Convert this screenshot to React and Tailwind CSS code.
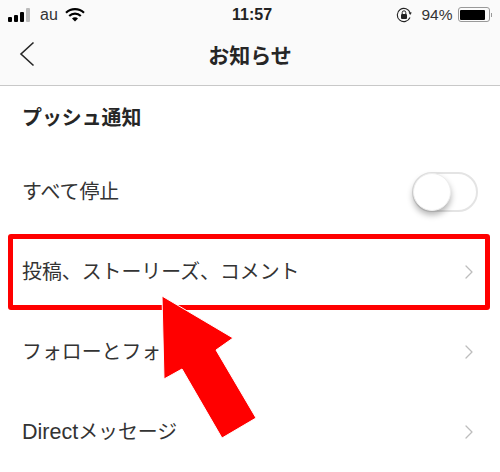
import { ChevronRight } from "lucide-react";

const font = { fontFamily: '"Liberation Sans", "Noto Sans CJK JP", sans-serif' };

const StatusBar = () => (
  <div className="h-[28px] flex items-center justify-between px-[8px] pt-[1px] text-[#333] text-[15.5px] relative">
    <div className="flex items-center">
      <div className="flex items-end gap-[2px] h-[14px]">
        <span className="w-[4px] h-[5px] bg-black rounded-[1px]"></span>
        <span className="w-[4px] h-[7px] bg-black rounded-[1px]"></span>
        <span className="w-[4px] h-[10px] bg-black rounded-[1px]"></span>
        <span className="w-[4px] h-[14px] bg-[#bbb] rounded-[1px]"></span>
      </div>
      <span className="ml-[10px] text-[16px]">au</span>
      <svg width="20" height="14" viewBox="0 0 20 14" className="ml-[7px]">
        <path d="M1 4.8a13 13 0 0 1 18 0" fill="none" stroke="#000" strokeWidth="2.2" />
        <path d="M4.2 8a8.4 8.4 0 0 1 11.6 0" fill="none" stroke="#000" strokeWidth="2.2" />
        <path d="M7 10.4a4.2 4.2 0 0 1 6 0L10 13.6z" fill="#000" />
      </svg>
    </div>
    <span className="absolute left-[232px] font-bold text-[16px] text-[#222]">11:57</span>
    <div className="flex items-center gap-[5px]">
      <svg width="16" height="16" viewBox="0 0 16 16">
        <path d="M14 10.5A6.6 6.6 0 1 1 14.2 6" fill="none" stroke="#222" strokeWidth="1.1" />
        <path d="M12.6 5.6h3.2L14.2 8z" fill="#222" />
        <rect x="5" y="7" width="6" height="5" rx="1" fill="#222" />
        <path d="M6.2 7V5.6a1.8 1.8 0 0 1 3.6 0V7" fill="none" stroke="#222" strokeWidth="1" />
      </svg>
      <span className="ml-[4px] text-[15.5px]">94%</span>
      <div className="flex items-center">
        <div className="w-[32px] h-[15px] border border-[#999] rounded-[3px] p-[1.5px]">
          <div className="w-[25px] h-full bg-black rounded-[1px]"></div>
        </div>
        <span className="w-[1.5px] h-[4px] bg-[#999] ml-[1px]"></span>
      </div>
    </div>
  </div>
);

const Row = ({ label, children }) => (
  <div className="h-[80px] flex items-center justify-between px-[22px]">
    <span className="text-[19.9px] text-[#333] mt-[1px]">{label}</span>
    {children}
  </div>
);

const Chevron = () => <ChevronRight size={24} strokeWidth={1.3} className="text-[#bdbdbd] -mr-[3px]" />;

export default function App() {
  return (
    <div className="relative w-[500px] h-[472px] overflow-hidden bg-white" style={font}>
      <div className="bg-[#fafafa] border-b border-[#c8c8c8] h-[86px]">
        <StatusBar />
        <div className="relative h-[57px] flex items-center justify-center">
          <svg width="16" height="26" viewBox="0 0 16 26" className="absolute left-[19px] top-[13px]">
            <path d="M14.5 1.5 2 13l12.5 11.5" fill="none" stroke="#262626" strokeWidth="1.6" />
          </svg>
          <h1 className="text-[21px] font-bold text-[#262626] -mt-[1px]">お知らせ</h1>
        </div>
      </div>

      <div className="h-[66px] flex items-center pl-[22px]">
        <h2 className="text-[19.9px] font-bold text-[#262626]">プッシュ通知</h2>
      </div>

      <Row label="すべて停止">
        <div className="w-[66px] h-[40px] rounded-full border-[2px] border-[#e4e4e4] relative -mt-[1px]">
          <div className="absolute -left-[1px] -top-[1px] w-[38px] h-[38px] rounded-full bg-white shadow-[0_4px_6px_rgba(0,0,0,0.3)] border border-[#eee]"></div>
        </div>
      </Row>
      <Row label="投稿、ストーリーズ、コメント">
        <Chevron />
      </Row>
      <Row label="フォローとフォ">
        <Chevron />
      </Row>
      <Row label={<><span className="text-[21.5px]">Direct</span>メッセージ</>}>
        <Chevron />
      </Row>

      <div className="absolute left-[8px] top-[234px] w-[482px] h-[76px] border-[5px] border-[#ff0000] rounded-[3px] pointer-events-none"></div>

      <svg width="500" height="472" viewBox="0 0 500 472" className="absolute left-0 top-0 pointer-events-none">
        <polygon
          points="162,296 233,338 216,350 256,418 222,438 182,369 164,379"
          fill="#ff0000"
          stroke="#ffffff"
          strokeWidth="1"
        />
      </svg>
    </div>
  );
}
